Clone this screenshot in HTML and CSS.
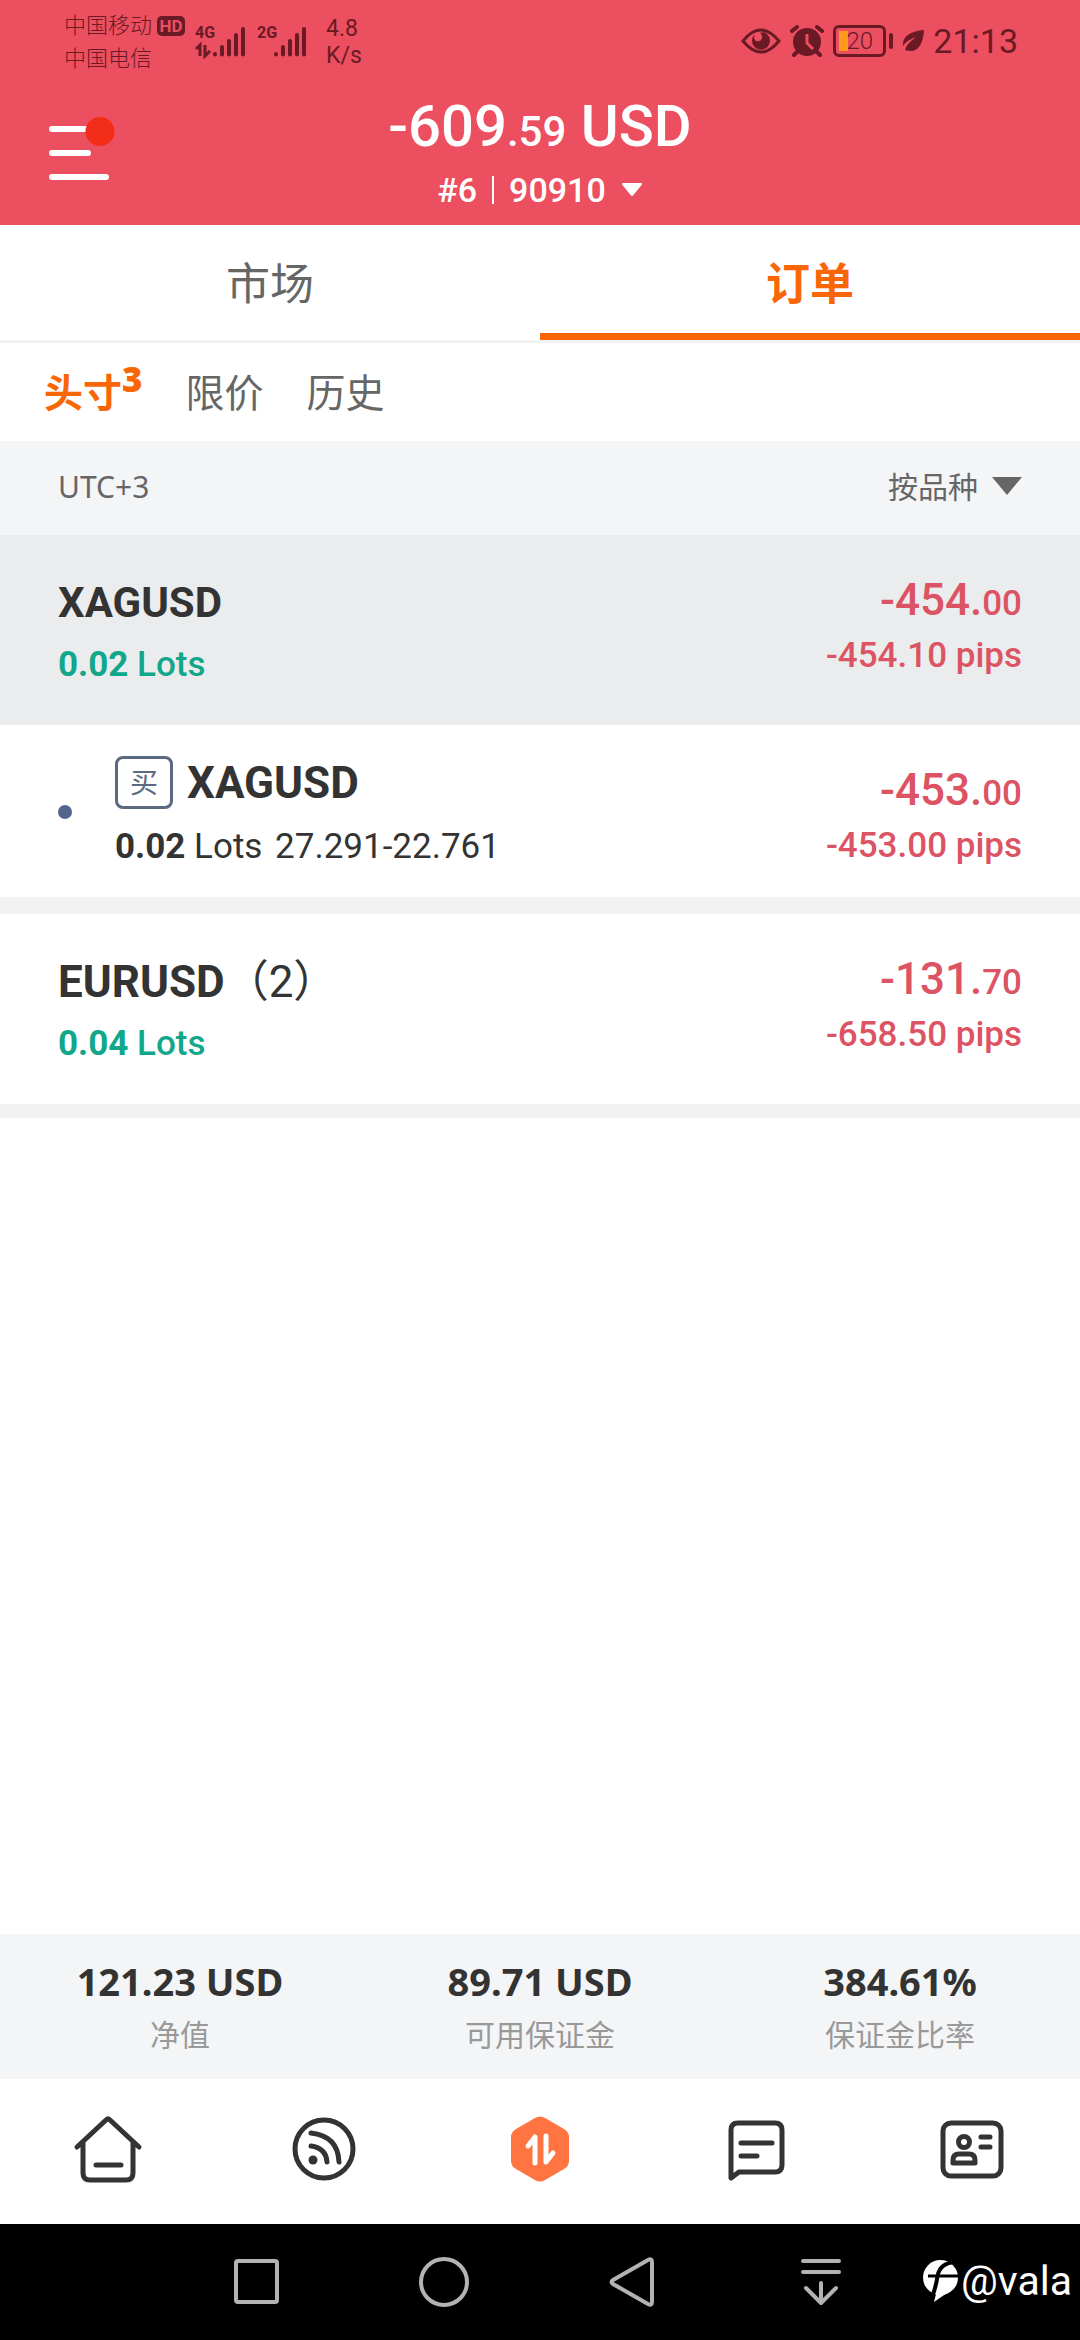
FILE: index.html
```html
<!DOCTYPE html>
<html lang="zh-CN">
<head>
<meta charset="utf-8">
<meta name="viewport" content="width=device-width, initial-scale=1">
<title>订单</title>
<link rel="stylesheet" href="styles.css">
</head>
<body>
<header class="top">
  <div class="status">
    <div class="carriers">
      <div class="carrier">中国移动<span class="hd">HD</span></div>
      <div class="carrier">中国电信</div>
    </div>
    <svg class="signal" width="54" height="36" viewBox="0 0 54 36" aria-hidden="true">
      <text x="0" y="15" class="net">4G</text>
      <path d="M1 26l4-4v11M10 22v11l5-5" class="thin"/>
      <path d="M20 31v.5M27 24v7.500M34 18v13.500M41 12v19.500M48 6v25.500" class="bars"/>
    </svg>
    <svg class="signal" width="54" height="36" viewBox="0 0 54 36" aria-hidden="true">
      <text x="0" y="15" class="net">2G</text>
      <path d="M19 31v.5M26 24v7.500M33 18v13.500M40 12v19.500M47 6v25.500" class="bars"/>
    </svg>
    <div class="speed"><span>4.8</span><span>K/s</span></div>
    <div class="status-right">
      <svg width="40" height="28" viewBox="0 0 40 28" aria-hidden="true">
        <path d="M2 14Q19-8 38 14Q20 36 2 14Z" fill="none" stroke="currentColor" stroke-width="3"/>
        <path d="M14 7a9 9 0 1 0 12 0c-2-2-5-2-7-1 3 2 3 7-1 8-3 1-5-1-5-4z" fill="currentColor"/>
      </svg>
      <svg width="34" height="32" viewBox="0 0 34 32" aria-hidden="true">
        <circle cx="17" cy="17" r="14" fill="currentColor"/>
        <path d="M2 6l5-4M32 6l-5-4M7 27l-3 3M27 27l3 3" stroke="currentColor" stroke-width="4" stroke-linecap="round"/>
        <path d="M17 9v9l6 6" fill="none" stroke="#ec4f5f" stroke-width="3"/>
      </svg>
      <div class="battery"><span>20</span></div>
      <svg width="22" height="24" viewBox="0 0 22 24" aria-hidden="true">
        <path d="M22 1C9 2 0 7 1 17c3-5 8-7 13-9-5 4-9 7-11 13 12 4 18-4 19-20z" fill="currentColor"/>
      </svg>
      <time>21:13</time>
    </div>
  </div>
  <div class="titlebar">
    <button class="menu" type="button" aria-label="菜单">
      <svg width="68" height="66" viewBox="0 0 68 66">
        <path d="M3 13h54M3 37h36M3 61h54" stroke="#fff" stroke-width="6" stroke-linecap="round"/>
        <circle cx="51" cy="15.500" r="14.500" fill="#f22d17"/>
      </svg>
    </button>
    <div class="balance">
      <h1>-609<small>.59</small> USD</h1>
      <button class="account" type="button">
        <span>#6</span><i class="bar"></i><span>90910</span>
        <svg width="22" height="14" viewBox="0 0 22 14"><path d="M2 1h18l-9 11z" fill="#fff" stroke="#fff" stroke-width="2" stroke-linejoin="round"/></svg>
      </button>
    </div>
  </div>
</header>

<nav class="tabs">
  <a href="#market">市场</a>
  <a href="#orders" class="active" aria-current="page">订单</a>
</nav>
<nav class="subtabs">
  <a href="#positions" class="active">头寸<b>3</b></a>
  <a href="#pending">限价</a>
  <a href="#history">历史</a>
</nav>

<main>
  <div class="filter">
    <span>UTC+3</span>
    <label class="sort">
      <select aria-label="排序"><option>按品种</option></select>
      <svg width="30" height="18" viewBox="0 0 30 18" aria-hidden="true"><path d="M0 0h30L15 18z" fill="#666"/></svg>
    </label>
  </div>
  <ul class="orders">
    <li class="order selected">
      <div class="info">
        <h2>XAGUSD</h2>
        <p class="lots green"><b>0.02</b> Lots</p>
      </div>
      <div class="result">
        <p class="profit">-454.<small>00</small></p>
        <p class="pips">-454.10 pips</p>
      </div>
    </li>
    <li class="order child">
      <i class="dot"></i>
      <div class="info">
        <div class="name"><span class="side">买</span><h2>XAGUSD</h2></div>
        <p class="lots"><b>0.02</b> Lots <span class="prices">27.291-22.761</span></p>
      </div>
      <div class="result">
        <p class="profit">-453.<small>00</small></p>
        <p class="pips">-453.00 pips</p>
      </div>
    </li>
    <li class="order spaced">
      <div class="info">
        <h2>EURUSD<span class="count">（2）</span></h2>
        <p class="lots green"><b>0.04</b> Lots</p>
      </div>
      <div class="result">
        <p class="profit">-131.<small>70</small></p>
        <p class="pips">-658.50 pips</p>
      </div>
    </li>
  </ul>
</main>

<footer>
  <dl class="summary">
    <div><dd>121.23 USD</dd><dt>净值</dt></div>
    <div><dd>89.71 USD</dd><dt>可用保证金</dt></div>
    <div><dd>384.61%</dd><dt>保证金比率</dt></div>
  </dl>
  <nav class="dock">
    <a href="#home" aria-label="首页">
      <svg width="72" height="72" viewBox="0 0 72 72"><path d="M5 34L34 7q2-2 4 0L67 34M11 29v31q0 7 7 7h36q7 0 7-7V29M24 52h25"/></svg>
    </a>
    <a href="#feed" aria-label="动态">
      <svg width="72" height="72" viewBox="0 0 72 72"><circle cx="36" cy="36" r="29"/><path d="M23 20q27 3 28 29M23 33q15 2 16 16"/><circle cx="25" cy="47" r="4.500" class="solid"/></svg>
    </a>
    <a href="#trade" aria-label="交易">
      <svg width="72" height="72" viewBox="0 0 72 72"><path d="M31 5q5-3 10 0l19 11q5 3 5 8v24q0 5-5 8L41 67q-5 3-10 0L12 56q-5-3-5-8V24q0-5 5-8z" class="hex"/><path d="M24 33l7-9v26M42 23v26l7-9" class="white"/></svg>
    </a>
    <a href="#chat" aria-label="消息">
      <svg width="72" height="72" viewBox="0 0 72 72"><path d="M11 65V17q0-7 7-7h37q7 0 7 7v35q0 7-7 7H19zM21 30h31M21 43h16"/></svg>
    </a>
    <a href="#me" aria-label="我的">
      <svg width="72" height="72" viewBox="0 0 72 72"><rect x="7" y="10" width="58" height="53" rx="8"/><circle cx="28" cy="29" r="5.500"/><path d="M17 50v-3q0-6 6-6h10q6 0 6 6v3zM45 24h9M45 34h9"/></svg>
    </a>
  </nav>
  <div class="system">
    <button type="button" aria-label="最近任务"><svg width="54" height="54" viewBox="0 0 54 54"><rect x="7" y="6" width="41" height="41" rx="2"/></svg></button>
    <button type="button" aria-label="主屏幕"><svg width="54" height="54" viewBox="0 0 54 54"><circle cx="27" cy="27" r="23"/></svg></button>
    <button type="button" aria-label="返回"><svg width="54" height="54" viewBox="0 0 54 54"><path d="M8 25L43 5q4-2 4 2v40q0 4-4 2L8 29q-3-2 0-4z"/></svg></button>
    <button type="button" aria-label="收起"><svg width="54" height="54" viewBox="0 0 54 54"><path d="M10 6h36M10 17h36M28 28v20M13 33l15 15 15-15"/></svg></button>
    <div class="mark">
      <svg width="36" height="42" viewBox="0 0 36 42" aria-hidden="true">
        <circle cx="17.500" cy="17.500" r="17.500" fill="#fff"/>
        <path d="M14 30L11 42L24 33z" fill="#fff"/>
        <path d="M32 2Q17 3 14.500 16Q13 27 9 37" fill="none" stroke="#000" stroke-width="4"/>
        <path d="M5 16h31" stroke="#000" stroke-width="3"/>
      </svg>
      <span>@vala</span>
    </div>
  </div>
</footer>
</body>
</html>
```

FILE: styles.css
```css
* { box-sizing: border-box; }

body {
  margin: 0;
  min-height: 100vh;
  display: flex;
  flex-direction: column;
  background: #fff;
  color: #333;
  font-family: Roboto, "Noto Sans CJK SC", sans-serif;
}

h1, h2, p, ul, dl, dd, dt { margin: 0; padding: 0; }
ul { list-style: none; }
a { color: inherit; text-decoration: none; }
svg { display: block; flex: none; }

button, select {
  margin: 0;
  padding: 0;
  border: 0;
  background: none;
  color: inherit;
  font: inherit;
  appearance: none;
}

/* Header */
.top { background: #ec4f5f; color: #fff; }

.status {
  display: flex;
  height: 80px;
  padding: 9px 62px 0 64px;
  color: #6a1a25;
}

.carriers { width: 131px; }
.carrier {
  display: flex;
  align-items: center;
  gap: 5px;
  font-size: 22px;
  font-weight: 300;
  line-height: 33px;
}
.hd {
  width: 28px;
  border-radius: 5px;
  background: #6a1a25;
  color: #ec4f5f;
  font-size: 17px;
  font-weight: 700;
  line-height: 20px;
  text-align: center;
}
.signal { margin: 14px 8px 0 0; }
.net { fill: currentColor; font-size: 16px; font-weight: 700; }
.thin { fill: none; stroke: currentColor; stroke-width: 3; }
.bars { fill: none; stroke: currentColor; stroke-width: 4; stroke-linecap: round; }

.speed {
  display: flex;
  flex-direction: column;
  margin: 6px 0 0 7px;
  font-size: 23px;
  line-height: 27px;
}

.status-right {
  display: flex;
  align-items: center;
  gap: 9px;
  height: 64px;
  margin-left: auto;
}
.battery {
  position: relative;
  width: 53px;
  height: 32px;
  margin-right: 7px;
  border: 3px solid currentColor;
  border-radius: 6px;
  background: linear-gradient(#ff9a1c, #ff9a1c) 3px center / 9px 20px no-repeat;
  font-size: 24px;
  font-weight: 300;
  line-height: 27px;
  text-align: center;
}
.battery::after {
  content: "";
  position: absolute;
  top: 5px;
  right: -10px;
  width: 4px;
  height: 16px;
  border-radius: 2px;
  background: currentColor;
}
.status-right time { font-size: 34px; line-height: 40px; }

.titlebar {
  display: grid;
  grid-template-columns: 1fr auto 1fr;
  align-items: start;
}
.menu { margin: 36px 0 0 49px; justify-self: start; }

.balance {
  display: flex;
  flex-direction: column;
  align-items: center;
  gap: 12px;
  padding: 14px 0 15px;
}
.balance h1 { font-size: 58px; font-weight: 500; line-height: 64px; }
.balance small { font-size: 42px; line-height: 1; }
.account {
  display: flex;
  align-items: center;
  gap: 15px;
  font-size: 34px;
  font-weight: 500;
  line-height: 40px;
}
.bar { width: 2px; height: 28px; background: #fff; }

/* Tabs */
.tabs {
  display: grid;
  grid-template-columns: 1fr 1fr;
  border-bottom: 3px solid #f2f2f2;
}
.tabs a {
  height: 115px;
  padding-top: 4px;
  color: #666;
  font-size: 44px;
  line-height: 112px;
  text-align: center;
}
.tabs .active {
  border-bottom: 7px solid #f96606;
  color: #f96606;
  font-weight: 700;
}
.subtabs {
  display: flex;
  gap: 43px;
  height: 98px;
  padding: 2px 44px 0;
  color: #666;
  font-size: 39px;
  line-height: 98px;
}
.subtabs .active { display: flex; color: #f96606; font-weight: 700; }
.subtabs b { font-family: "Noto Sans", sans-serif; font-size: 35px; line-height: 68px; }

/* Orders */
main { flex: 1; }
.filter {
  display: flex;
  justify-content: space-between;
  align-items: center;
  height: 94px;
  padding: 0 58px 4px;
  background: #f4f5f7;
  color: #666;
  font-family: "Noto Sans", "Noto Sans CJK SC", sans-serif;
  font-size: 30px;
}
.sort { display: flex; align-items: center; gap: 14px; }

.order {
  display: flex;
  align-items: flex-start;
  padding: 0 58px 40px;
}
.selected { background: #ebeced; }
.spaced { border-top: 17px solid #f2f2f2; border-bottom: 14px solid #f2f2f2; }
.info { flex: 1; display: flex; flex-direction: column; gap: 18px; padding-top: 44px; }
.order h2 { font-size: 42px; font-weight: 700; line-height: 48px; }
.spaced h2, .child h2 { font-size: 44px; }
.count { font-weight: 400; }
.lots { font-size: 35px; font-weight: 500; line-height: 40px; }
.green { color: #10a78b; }

.result {
  display: flex;
  flex-direction: column;
  gap: 12px;
  padding-top: 41px;
  color: #dc5463;
  font-weight: 500;
  text-align: right;
}
.profit { font-size: 44px; line-height: 48px; }
.profit small { font-size: 35px; line-height: 1; }
.pips { font-size: 35px; line-height: 40px; }

.child { padding-bottom: 30px; }
.child .info { padding-top: 31px; }
.child .lots { font-weight: 400; }
.dot {
  align-self: center;
  width: 14px;
  height: 14px;
  margin: 32px 43px 0 0;
  border-radius: 50%;
  background: #53658a;
}
.name { display: flex; align-items: center; gap: 14px; }
.side {
  width: 58px;
  height: 53px;
  border: 3px solid #5b6980;
  border-radius: 8px;
  color: #5b6980;
  font-size: 28px;
  line-height: 50px;
  text-align: center;
}
.prices { margin-left: 4px; }

/* Account summary */
.summary {
  display: grid;
  grid-template-columns: repeat(3, 1fr);
  padding: 21px 0 22px;
  background: #f4f5f7;
  font-family: "Noto Sans", "Noto Sans CJK SC", sans-serif;
  text-align: center;
}
.summary dd { font-size: 38px; font-weight: 700; line-height: 52px; }
.summary dt { padding-top: 6px; color: #999; font-size: 30px; line-height: 44px; }

/* Bottom navigation */
.dock {
  display: grid;
  grid-template-columns: repeat(5, 1fr);
  justify-items: center;
  padding: 34px 0 39px;
}
.dock svg {
  fill: none;
  stroke: #333;
  stroke-width: 5;
  stroke-linecap: round;
  stroke-linejoin: round;
}
.dock .solid { fill: #333; stroke: none; }
.dock .hex { fill: #ff7441; stroke: none; }
.dock .white { stroke: #fff; }

.system {
  display: grid;
  grid-template-columns: 162fr repeat(4, 188fr) 166fr;
  align-items: center;
  height: 116px;
  background: #000;
}
.system button { display: flex; justify-content: center; }
.system button:first-child { grid-column: 2; }
.system button svg {
  fill: none;
  stroke: #b3b3b3;
  stroke-width: 4;
  stroke-linecap: round;
  stroke-linejoin: round;
}
.mark {
  display: flex;
  align-items: center;
  justify-content: flex-end;
  gap: 2px;
  padding: 0 8px 2px 0;
  color: #fff;
  font-size: 41px;
  line-height: 48px;
}
```
